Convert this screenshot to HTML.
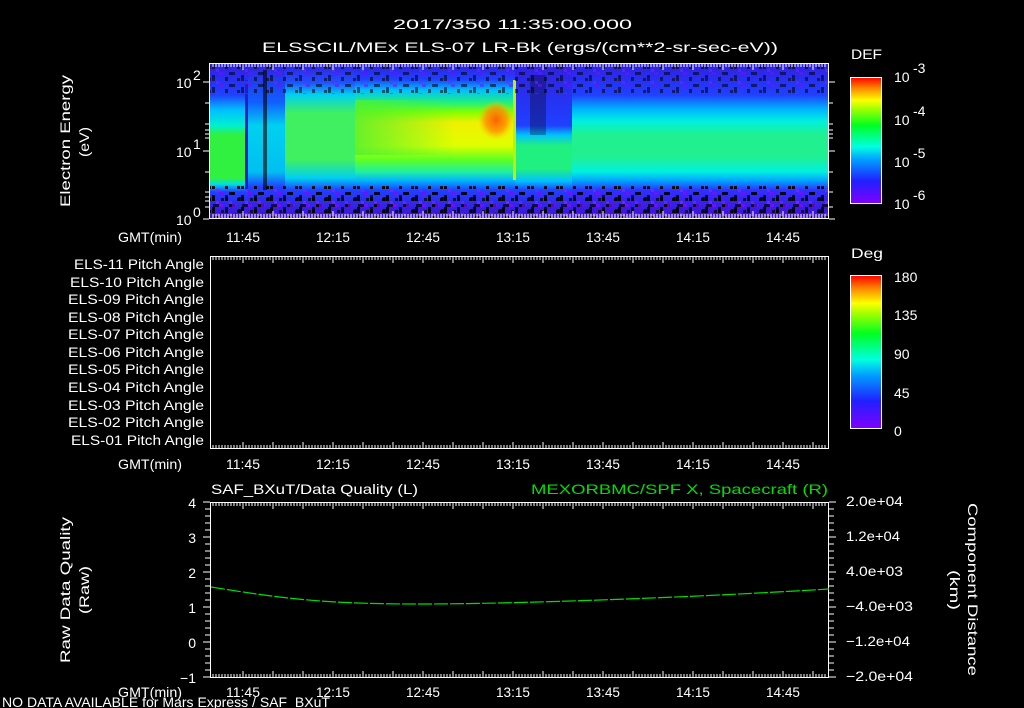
<!DOCTYPE html>
<html><head><meta charset="utf-8"><style>
html,body{margin:0;padding:0;background:#000;width:1024px;height:708px;overflow:hidden}
svg{display:block}
text{font-family:"Liberation Sans",sans-serif;fill:#fff;font-size:14px}
</style></head><body>
<svg width="1024" height="708" viewBox="0 0 1024 708" xmlns="http://www.w3.org/2000/svg">
<defs>
<linearGradient id="cb" x1="0" y1="1" x2="0" y2="0">
<stop offset="0" stop-color="#8000ff"/><stop offset="0.18" stop-color="#2020ff"/><stop offset="0.35" stop-color="#00a0ff"/><stop offset="0.45" stop-color="#00ffe0"/><stop offset="0.62" stop-color="#00ff20"/><stop offset="0.75" stop-color="#a0ff00"/><stop offset="0.82" stop-color="#ffff00"/><stop offset="0.92" stop-color="#ff8000"/><stop offset="1" stop-color="#ff0000"/>
</linearGradient>
<linearGradient id="gA" x1="0" y1="0" x2="0" y2="1">
<stop offset="0" stop-color="#3020e0"/><stop offset="0.2" stop-color="#2040ff"/><stop offset="0.3" stop-color="#00c0ff"/><stop offset="0.4" stop-color="#00f0d0"/><stop offset="0.46" stop-color="#30f040"/><stop offset="0.74" stop-color="#30f040"/><stop offset="0.78" stop-color="#00e0e0"/><stop offset="0.83" stop-color="#2040ff"/><stop offset="1" stop-color="#4010d0"/>
</linearGradient>
<linearGradient id="gB" x1="0" y1="0" x2="0" y2="1">
<stop offset="0" stop-color="#3020e0"/><stop offset="0.25" stop-color="#1060ff"/><stop offset="0.4" stop-color="#00d0f0"/><stop offset="0.7" stop-color="#00c0f0"/><stop offset="0.8" stop-color="#2040ff"/><stop offset="1" stop-color="#4010d0"/>
</linearGradient>
<linearGradient id="gC" x1="0" y1="0" x2="0" y2="1">
<stop offset="0" stop-color="#3020e0"/><stop offset="0.12" stop-color="#2050ff"/><stop offset="0.2" stop-color="#00d0f0"/><stop offset="0.32" stop-color="#40f060"/><stop offset="0.62" stop-color="#40f060"/><stop offset="0.74" stop-color="#00d0f0"/><stop offset="0.82" stop-color="#2040ff"/><stop offset="1" stop-color="#4010d0"/>
</linearGradient>
<linearGradient id="gD" x1="0" y1="0" x2="0" y2="1">
<stop offset="0" stop-color="#3020e0"/><stop offset="0.1" stop-color="#2040ff"/><stop offset="0.17" stop-color="#00c0ff"/><stop offset="0.25" stop-color="#20f080"/><stop offset="0.31" stop-color="#80ff00"/><stop offset="0.38" stop-color="#f0f000"/><stop offset="0.53" stop-color="#e0ff00"/><stop offset="0.62" stop-color="#60ff20"/><stop offset="0.7" stop-color="#20f0a0"/><stop offset="0.76" stop-color="#00b0ff"/><stop offset="0.82" stop-color="#2040ff"/><stop offset="1" stop-color="#4010d0"/>
</linearGradient>
<linearGradient id="gE" x1="0" y1="0" x2="0" y2="1">
<stop offset="0" stop-color="#3020e0"/><stop offset="0.4" stop-color="#2040ff"/><stop offset="0.46" stop-color="#00c0ff"/><stop offset="0.53" stop-color="#20f080"/><stop offset="0.68" stop-color="#20f080"/><stop offset="0.76" stop-color="#00c0ff"/><stop offset="0.82" stop-color="#2040ff"/><stop offset="1" stop-color="#4010d0"/>
</linearGradient>
<linearGradient id="gF" x1="0" y1="0" x2="0" y2="1">
<stop offset="0" stop-color="#3020e0"/><stop offset="0.2" stop-color="#2040ff"/><stop offset="0.29" stop-color="#00b0ff"/><stop offset="0.37" stop-color="#00f0e0"/><stop offset="0.46" stop-color="#20f090"/><stop offset="0.6" stop-color="#20f090"/><stop offset="0.7" stop-color="#00f0e0"/><stop offset="0.76" stop-color="#00a0ff"/><stop offset="0.82" stop-color="#3030ff"/><stop offset="1" stop-color="#4010d0"/>
</linearGradient>
<linearGradient id="fadeL" x1="0" y1="0" x2="1" y2="0">
<stop offset="0" stop-color="#50f030" stop-opacity="0.85"/><stop offset="1" stop-color="#50f030" stop-opacity="0"/>
</linearGradient>
<radialGradient id="org">
<stop offset="0" stop-color="#ff6000"/><stop offset="0.6" stop-color="#ff9000" stop-opacity="0.8"/><stop offset="1" stop-color="#ffc000" stop-opacity="0"/>
</radialGradient>
<clipPath id="cp1"><rect x="210" y="64" width="619" height="154"/></clipPath>
<pattern id="spk" width="29" height="12" patternUnits="userSpaceOnUse">
<rect x="0" y="0" width="3" height="3" fill="#000"/><rect x="9" y="3" width="3" height="6" fill="#000"/><rect x="16" y="0" width="4" height="3" fill="#7010ff"/><rect x="5" y="6" width="3" height="3" fill="#000"/><rect x="22" y="5" width="3" height="4" fill="#000"/><rect x="13" y="9" width="3" height="3" fill="#8020ff"/><rect x="26" y="0" width="3" height="3" fill="#000"/>
</pattern>
</defs>

<text x="393" y="29" font-size="16" textLength="239" lengthAdjust="spacingAndGlyphs">2017/350 11:35:00.000</text>
<text x="262" y="52" font-size="15" textLength="516" lengthAdjust="spacingAndGlyphs">ELSSCIL/MEx ELS-07 LR-Bk  (ergs/(cm**2-sr-sec-eV))</text>

<g clip-path="url(#cp1)">
<rect x="210" y="64" width="38" height="154" fill="url(#gA)"/>
<rect x="248" y="64" width="37" height="154" fill="url(#gB)"/>
<rect x="285" y="64" width="70" height="154" fill="url(#gC)"/>
<rect x="355" y="64" width="160" height="154" fill="url(#gD)"/>
<rect x="355" y="100" width="100" height="55" fill="url(#fadeL)"/>
<ellipse cx="496" cy="120" rx="18" ry="20" fill="url(#org)"/>
<rect x="515" y="64" width="57" height="154" fill="url(#gE)"/>
<rect x="572" y="64" width="257" height="154" fill="url(#gF)"/>
<rect x="513" y="80" width="3" height="100" fill="#c0f000"/>
<rect x="263" y="70" width="4" height="120" fill="#000" opacity="0.6"/>
<rect x="245" y="80" width="3" height="110" fill="#2020c0"/>
<rect x="530" y="75" width="16" height="60" fill="#000" opacity="0.3"/>
<rect x="200" y="64" width="640" height="30" fill="url(#spk)" opacity="0.55"/>
<rect x="200" y="186" width="640" height="32" fill="url(#spk)" opacity="0.9"/>
<rect x="200" y="195" width="640" height="23" fill="url(#spk)" transform="translate(13,0)" opacity="0.7"/>
</g>

<rect x="209.5" y="63.5" width="619" height="155" fill="none" stroke="#fff"/>
<g stroke="#fff">
<path d="M203 82h6M203 151h6M203 219h6M829 82h6M829 151h6M829 219h6M205 103h4M205 124h4M205 130h4M205 134h4M205 138h4M205 172h4M205 192h4M205 197h4M205 201h4M205 207h4M829 103h4M829 124h4M829 130h4M829 134h4M829 138h4M829 172h4M829 192h4M829 207h4"/>
</g>
<g stroke="#fff" id="ticks1">
<path d="M213 63v4M216 63v4M219 63v4M222 63v4M225 63v4M228 63v4M231 63v4M234 63v4M237 63v4M240 63v4M243 63v7M246 63v4M249 63v4M252 63v4M255 63v4M258 63v4M261 63v4M264 63v4M267 63v4M270 63v4M273 63v7M276 63v4M279 63v4M282 63v4M285 63v4M288 63v4M291 63v4M294 63v4M297 63v4M300 63v4M303 63v7M306 63v4M309 63v4M312 63v4M315 63v4M318 63v4M321 63v4M324 63v4M327 63v4M330 63v4M333 63v7M336 63v4M339 63v4M342 63v4M345 63v4M348 63v4M351 63v4M354 63v4M357 63v4M360 63v4M363 63v7M366 63v4M369 63v4M372 63v4M375 63v4M378 63v4M381 63v4M384 63v4M387 63v4M390 63v4M393 63v7M396 63v4M399 63v4M402 63v4M405 63v4M408 63v4M411 63v4M414 63v4M417 63v4M420 63v4M423 63v7M426 63v4M429 63v4M432 63v4M435 63v4M438 63v4M441 63v4M444 63v4M447 63v4M450 63v4M453 63v7M456 63v4M459 63v4M462 63v4M465 63v4M468 63v4M471 63v4M474 63v4M477 63v4M480 63v4M483 63v7M486 63v4M489 63v4M492 63v4M495 63v4M498 63v4M501 63v4M504 63v4M507 63v4M510 63v4M513 63v7M516 63v4M519 63v4M522 63v4M525 63v4M528 63v4M531 63v4M534 63v4M537 63v4M540 63v4M543 63v7M546 63v4M549 63v4M552 63v4M555 63v4M558 63v4M561 63v4M564 63v4M567 63v4M570 63v4M573 63v7M576 63v4M579 63v4M582 63v4M585 63v4M588 63v4M591 63v4M594 63v4M597 63v4M600 63v4M603 63v7M606 63v4M609 63v4M612 63v4M615 63v4M618 63v4M621 63v4M624 63v4M627 63v4M630 63v4M633 63v7M636 63v4M639 63v4M642 63v4M645 63v4M648 63v4M651 63v4M654 63v4M657 63v4M660 63v4M663 63v7M666 63v4M669 63v4M672 63v4M675 63v4M678 63v4M681 63v4M684 63v4M687 63v4M690 63v4M693 63v7M696 63v4M699 63v4M702 63v4M705 63v4M708 63v4M711 63v4M714 63v4M717 63v4M720 63v4M723 63v7M726 63v4M729 63v4M732 63v4M735 63v4M738 63v4M741 63v4M744 63v4M747 63v4M750 63v4M753 63v7M756 63v4M759 63v4M762 63v4M765 63v4M768 63v4M771 63v4M774 63v4M777 63v4M780 63v4M783 63v7M786 63v4M789 63v4M792 63v4M795 63v4M798 63v4M801 63v4M804 63v4M807 63v4M810 63v4M813 63v7M816 63v4M819 63v4M822 63v4M825 63v4"/>
</g>
<use href="#ticks1" transform="translate(0,281) scale(1,-1)"/>
<text x="176" y="88" font-size="14">10</text><text x="193" y="80" font-size="10">2</text>
<text x="176" y="157" font-size="14">10</text><text x="193" y="149" font-size="10">1</text>
<text x="176" y="225" font-size="14">10</text><text x="193" y="217" font-size="10">0</text>
<text transform="translate(70,207) rotate(-90)" font-size="14" textLength="132" lengthAdjust="spacingAndGlyphs">Electron Energy</text>
<text transform="translate(89,157) rotate(-90)" font-size="14" textLength="30" lengthAdjust="spacingAndGlyphs">(eV)</text>
<g font-size="14">
<text x="118" y="242" textLength="64" lengthAdjust="spacingAndGlyphs">GMT(min)</text>
<text x="226" y="242" textLength="34" lengthAdjust="spacingAndGlyphs">11:45</text><text x="316" y="242" textLength="34" lengthAdjust="spacingAndGlyphs">12:15</text><text x="406" y="242" textLength="34" lengthAdjust="spacingAndGlyphs">12:45</text><text x="496" y="242" textLength="34" lengthAdjust="spacingAndGlyphs">13:15</text><text x="586" y="242" textLength="34" lengthAdjust="spacingAndGlyphs">13:45</text><text x="676" y="242" textLength="34" lengthAdjust="spacingAndGlyphs">14:15</text><text x="766" y="242" textLength="34" lengthAdjust="spacingAndGlyphs">14:45</text>
</g>
<text x="851" y="59" font-size="16" textLength="31" lengthAdjust="spacingAndGlyphs">DEF</text>
<rect x="850.5" y="77.5" width="31" height="126" fill="url(#cb)" stroke="#fff"/>
<g font-size="17"><text x="894" y="82">10</text><text x="913" y="73" font-size="12">-3</text>
<text x="894" y="125">10</text><text x="913" y="116" font-size="12">-4</text>
<text x="894" y="167">10</text><text x="913" y="158" font-size="12">-5</text>
<text x="894" y="209">10</text><text x="913" y="200" font-size="12">-6</text></g>

<rect x="210.5" y="256.5" width="618" height="192" fill="none" stroke="#fff"/>
<use href="#ticks1" transform="translate(0,193)"/>
<use href="#ticks1" transform="translate(0,512) scale(1,-1)"/>
<g font-size="13">
<text x="74" y="269" textLength="130" lengthAdjust="spacingAndGlyphs">ELS-11 Pitch Angle</text><text x="70" y="287" textLength="134" lengthAdjust="spacingAndGlyphs">ELS-10 Pitch Angle</text><text x="68" y="304" textLength="136" lengthAdjust="spacingAndGlyphs">ELS-09 Pitch Angle</text><text x="68" y="322" textLength="136" lengthAdjust="spacingAndGlyphs">ELS-08 Pitch Angle</text><text x="68" y="339" textLength="136" lengthAdjust="spacingAndGlyphs">ELS-07 Pitch Angle</text><text x="68" y="357" textLength="136" lengthAdjust="spacingAndGlyphs">ELS-06 Pitch Angle</text><text x="68" y="374" textLength="136" lengthAdjust="spacingAndGlyphs">ELS-05 Pitch Angle</text><text x="68" y="392" textLength="136" lengthAdjust="spacingAndGlyphs">ELS-04 Pitch Angle</text><text x="68" y="410" textLength="136" lengthAdjust="spacingAndGlyphs">ELS-03 Pitch Angle</text><text x="68" y="427" textLength="136" lengthAdjust="spacingAndGlyphs">ELS-02 Pitch Angle</text><text x="71" y="445" textLength="133" lengthAdjust="spacingAndGlyphs">ELS-01 Pitch Angle</text>
</g>
<g font-size="14">
<text x="118" y="469" textLength="64" lengthAdjust="spacingAndGlyphs">GMT(min)</text>
<text x="226" y="469" textLength="34" lengthAdjust="spacingAndGlyphs">11:45</text><text x="316" y="469" textLength="34" lengthAdjust="spacingAndGlyphs">12:15</text><text x="406" y="469" textLength="34" lengthAdjust="spacingAndGlyphs">12:45</text><text x="496" y="469" textLength="34" lengthAdjust="spacingAndGlyphs">13:15</text><text x="586" y="469" textLength="34" lengthAdjust="spacingAndGlyphs">13:45</text><text x="676" y="469" textLength="34" lengthAdjust="spacingAndGlyphs">14:15</text><text x="766" y="469" textLength="34" lengthAdjust="spacingAndGlyphs">14:45</text>
</g>
<text x="851" y="258" font-size="16" textLength="32" lengthAdjust="spacingAndGlyphs">Deg</text>
<rect x="850.5" y="275.5" width="31" height="153" fill="url(#cb)" stroke="#fff"/>
<g font-size="17"><text x="894" y="282">180</text><text x="894" y="320">135</text><text x="894" y="359">90</text><text x="894" y="398">45</text><text x="894" y="436">0</text></g>

<text x="211" y="494" font-size="15" textLength="207" lengthAdjust="spacingAndGlyphs">SAF_BXuT/Data Quality (L)</text>
<text x="531" y="494" font-size="15" textLength="297" lengthAdjust="spacingAndGlyphs" style="fill:#00e000">MEXORBMC/SPF X, Spacecraft (R)</text>
<rect x="210.5" y="502.5" width="618" height="175" fill="none" stroke="#fff"/>
<use href="#ticks1" transform="translate(0,439)"/>
<use href="#ticks1" transform="translate(0,741) scale(1,-1)"/>
<g stroke="#fff">
<path d="M203 502h7M203 537h7M203 572h7M203 607h7M203 642h7M203 677h7M829 502h7M829 537h7M829 572h7M829 607h7M829 642h7M829 677h7"/>
<path d="M205 509h5M205 516h5M205 523h5M205 530h5M205 544h5M205 551h5M205 558h5M205 565h5M205 579h5M205 586h5M205 593h5M205 600h5M205 614h5M205 621h5M205 628h5M205 635h5M205 649h5M205 656h5M205 663h5M205 670h5M829 509h5M829 516h5M829 523h5M829 530h5M829 544h5M829 551h5M829 558h5M829 565h5M829 579h5M829 586h5M829 593h5M829 600h5M829 614h5M829 621h5M829 628h5M829 635h5M829 649h5M829 656h5M829 663h5M829 670h5"/>
</g>
<path d="M211 587 C 280 598, 320 604, 420 604 S 700 597, 829 589" fill="none" stroke="#00e000" stroke-width="1.2" stroke-dasharray="14 2"/>
<g font-size="15" text-anchor="end">
<text x="196" y="508">4</text><text x="196" y="543">3</text><text x="196" y="578">2</text><text x="196" y="613">1</text><text x="196" y="648">0</text><text x="196" y="683">−1</text>
</g>
<g font-size="14">
<text x="846" y="506" textLength="57" lengthAdjust="spacingAndGlyphs">2.0e+04</text><text x="846" y="541" textLength="54" lengthAdjust="spacingAndGlyphs">1.2e+04</text><text x="846" y="576" textLength="57" lengthAdjust="spacingAndGlyphs">4.0e+03</text><text x="846" y="611" textLength="67" lengthAdjust="spacingAndGlyphs">−4.0e+03</text><text x="846" y="646" textLength="64" lengthAdjust="spacingAndGlyphs">−1.2e+04</text><text x="846" y="681" textLength="67" lengthAdjust="spacingAndGlyphs">−2.0e+04</text>
</g>
<text transform="translate(70,663) rotate(-90)" font-size="14" textLength="146" lengthAdjust="spacingAndGlyphs">Raw Data Quality</text>
<text transform="translate(89,614) rotate(-90)" font-size="14" textLength="48" lengthAdjust="spacingAndGlyphs">(Raw)</text>
<text transform="translate(968,503) rotate(90)" font-size="14" textLength="173" lengthAdjust="spacingAndGlyphs">Component Distance</text>
<text transform="translate(950,570) rotate(90)" font-size="14" textLength="40" lengthAdjust="spacingAndGlyphs">(km)</text>
<g font-size="14">
<text x="118" y="697" textLength="64" lengthAdjust="spacingAndGlyphs">GMT(min)</text>
<text x="226" y="697" textLength="34" lengthAdjust="spacingAndGlyphs">11:45</text><text x="316" y="697" textLength="34" lengthAdjust="spacingAndGlyphs">12:15</text><text x="406" y="697" textLength="34" lengthAdjust="spacingAndGlyphs">12:45</text><text x="496" y="697" textLength="34" lengthAdjust="spacingAndGlyphs">13:15</text><text x="586" y="697" textLength="34" lengthAdjust="spacingAndGlyphs">13:45</text><text x="676" y="697" textLength="34" lengthAdjust="spacingAndGlyphs">14:15</text><text x="766" y="697" textLength="34" lengthAdjust="spacingAndGlyphs">14:45</text>
</g>
<text x="2" y="707" font-size="13" textLength="328" lengthAdjust="spacingAndGlyphs">NO DATA AVAILABLE for Mars  Express / SAF_BXuT</text>
</svg>
</body></html>
